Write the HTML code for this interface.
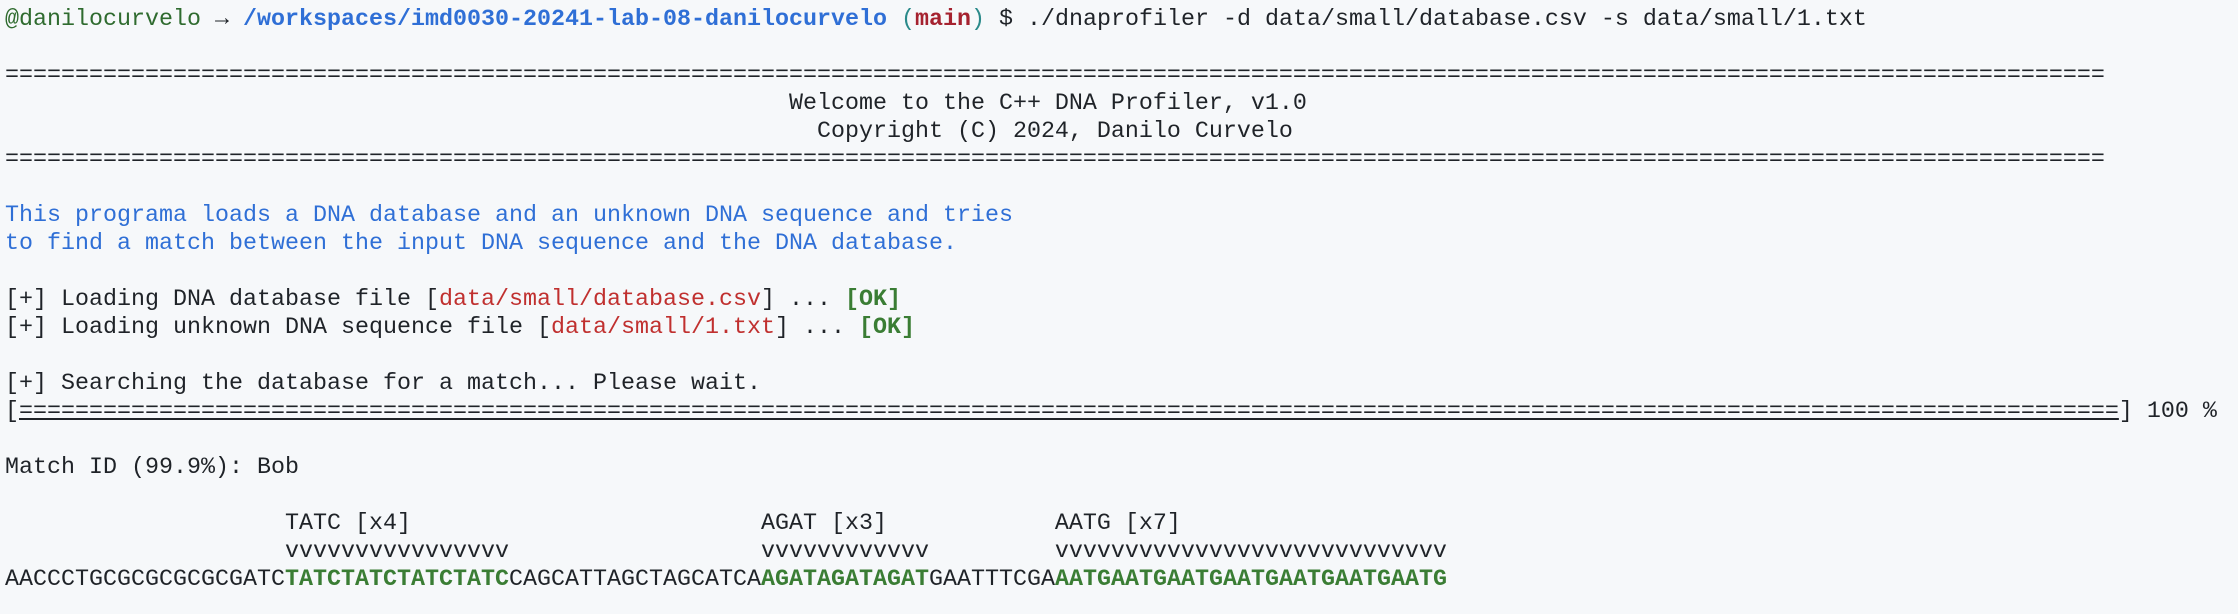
<!DOCTYPE html>
<html><head><meta charset="utf-8"><style>
html,body{margin:0;padding:0;background:#f6f8fa;width:2238px;height:614px;overflow:hidden}
pre{margin:0;padding:6px 0 0 5px;font-family:"Liberation Mono","DejaVu Sans Mono",monospace;font-size:23.33px;line-height:28px;color:#1f2328;white-space:pre}
.g{color:#2f6b2f}.b{color:#2f6fd6}.bb{color:#2f6fd6;font-weight:bold}.r{color:#a5222f;font-weight:bold}
.rd{color:#c0302f}.ok{color:#3a7d34;font-weight:bold}.dna{color:#3a7d34;font-weight:bold}
.u{text-decoration:underline;text-decoration-thickness:2px}
</style></head><body><pre><span class="g">@danilocurvelo</span> → <span class="bb">/workspaces/imd0030-20241-lab-08-danilocurvelo</span> <span style="color:#2a8a8a">(</span><span class="r">main</span><span style="color:#2a8a8a">)</span> $ ./dnaprofiler -d data/small/database.csv -s data/small/1.txt

======================================================================================================================================================
                                                        Welcome to the C++ DNA Profiler, v1.0
                                                          Copyright (C) 2024, Danilo Curvelo
======================================================================================================================================================

<span class="b">This programa loads a DNA database and an unknown DNA sequence and tries</span>
<span class="b">to find a match between the input DNA sequence and the DNA database.</span>

[+] Loading DNA database file [<span class="rd">data/small/database.csv</span>] ... <span class="ok">[OK]</span>
[+] Loading unknown DNA sequence file [<span class="rd">data/small/1.txt</span>] ... <span class="ok">[OK]</span>

[+] Searching the database for a match... Please wait.
[<span class="u">======================================================================================================================================================</span>] 100 %

Match ID (99.9%): Bob

                    TATC [x4]                         AGAT [x3]            AATG [x7]
                    vvvvvvvvvvvvvvvv                  vvvvvvvvvvvv         vvvvvvvvvvvvvvvvvvvvvvvvvvvv
AACCCTGCGCGCGCGCGATC<span class="dna">TATCTATCTATCTATC</span>CAGCATTAGCTAGCATCA<span class="dna">AGATAGATAGAT</span>GAATTTCGA<span class="dna">AATGAATGAATGAATGAATGAATGAATG</span>
</pre></body></html>
